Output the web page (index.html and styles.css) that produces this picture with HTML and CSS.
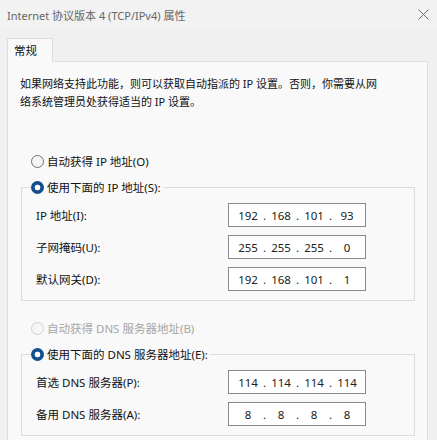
FILE: index.html
```html
<!DOCTYPE html>
<html lang="zh-CN">
<head>
    <meta charset="UTF-8">
    <title>Internet 协议版本 4 (TCP/IPv4) 属性</title>
    <link rel="stylesheet" href="styles.css">
</head>
<body>
    <div class="window">
        <div class="titlebar">
            <span class="title">Internet 协议版本 4 (TCP/IPv4) 属性</span>
            <svg class="close" width="11" height="11" viewBox="0 0 11 11">
                <path d="M0.5 0.5 L10.5 10.5 M10.5 0.5 L0.5 10.5" stroke="#707070" stroke-width="1" fill="none"/>
            </svg>
        </div>

        <div class="content">
            <div class="tabs">
                <div class="tab">常规</div>
            </div>

            <div class="panel">
                <p class="desc">如果网络支持此功能，则可以获取自动指派的 IP 设置。否则，你需要从网<br>络系统管理员处获得适当的 IP 设置。</p>

                <div class="option option-first">
                    <span class="radio"></span>
                    <span>自动获得 IP 地址(O)</span>
                </div>

                <fieldset class="group">
                    <legend class="option">
                        <span class="radio checked"></span>
                        <span>使用下面的 IP 地址(S):</span>
                    </legend>
                    <div class="row">
                        <span class="label">IP 地址(I):</span>
                        <div class="ip"><span>192</span><i>.</i><span>168</span><i>.</i><span>101</span><i>.</i><span>93</span></div>
                    </div>
                    <div class="row">
                        <span class="label">子网掩码(U):</span>
                        <div class="ip"><span>255</span><i>.</i><span>255</span><i>.</i><span>255</span><i>.</i><span>0</span></div>
                    </div>
                    <div class="row">
                        <span class="label">默认网关(D):</span>
                        <div class="ip"><span>192</span><i>.</i><span>168</span><i>.</i><span>101</span><i>.</i><span>1</span></div>
                    </div>
                </fieldset>

                <div class="option option-dns disabled">
                    <span class="radio"></span>
                    <span>自动获得 DNS 服务器地址(B)</span>
                </div>

                <fieldset class="group group-dns">
                    <legend class="option">
                        <span class="radio checked"></span>
                        <span>使用下面的 DNS 服务器地址(E):</span>
                    </legend>
                    <div class="row">
                        <span class="label">首选 DNS 服务器(P):</span>
                        <div class="ip"><span>114</span><i>.</i><span>114</span><i>.</i><span>114</span><i>.</i><span>114</span></div>
                    </div>
                    <div class="row">
                        <span class="label">备用 DNS 服务器(A):</span>
                        <div class="ip"><span>8</span><i>.</i><span>8</span><i>.</i><span>8</span><i>.</i><span>8</span></div>
                    </div>
                </fieldset>
            </div>
        </div>
    </div>
</body>
</html>
```

FILE: styles.css
```css
body {
    margin: 0;
    background-color: #f0f0f0;
    font-family: "Noto Sans", "Noto Sans CJK SC", sans-serif;
    font-size: 11px;
    color: #111;
}
.window {
    width: 437px;
    height: 440px;
    overflow: hidden;
    background-color: #f0f0f0;
}
.titlebar {
    height: 27px;
    display: flex;
    align-items: center;
    justify-content: space-between;
    padding: 0 8px 0 7px;
    box-sizing: border-box;
    background-color: #f2f2f2;
}
.title {
    color: #666;
    font-size: 11px;
    padding-top: 2px;
}
.close {
    margin-top: 2px;
}
.content {
    padding: 11px 9px 0 7px;
}
.tabs {
    display: flex;
}
.tab {
    width: 46px;
    height: 24px;
    box-sizing: border-box;
    border: 1px solid #dedede;
    border-bottom: none;
    background-color: #f9f9f9;
    padding-left: 6px;
    line-height: 23px;
    font-size: 11.5px;
    margin-bottom: -1px;
    position: relative;
}
.panel {
    background-color: #f9f9f9;
    border: 1px solid #dedede;
    height: 400px;
    padding: 13px 12px 0 12px;
}
.desc {
    margin: 0;
    line-height: 18px;
}
.option {
    display: flex;
    align-items: center;
    height: 20px;
    gap: 3px;
    font-size: 11.5px;
}
.option-first {
    margin: 40px 0 0 11px;
}
.option-dns {
    margin: 17px 0 0 11px;
}
.disabled {
    color: #a6a6a6;
}
.radio {
    width: 13px;
    height: 13px;
    box-sizing: border-box;
    border-radius: 50%;
    border: 1px solid #707070;
    background-color: #f6f6f6;
}
.disabled .radio {
    border-color: #cfcfcf;
}
.radio.checked {
    border: none;
    background: radial-gradient(circle, #fff 0 2.6px, #134f8c 3.2px);
}
.group {
    margin: 6px 0 0 1px;
    width: 394px;
    box-sizing: border-box;
    border: 1px solid #dcdcdc;
    padding: 6px 0 9px 14px;
}
.group legend {
    padding: 0 2px 0 0;
    margin-left: -5px;
}
.group-dns {
    margin-top: 6px;
}
.row {
    display: flex;
    align-items: center;
    height: 24px;
    margin-bottom: 8px;
}
.row:last-child {
    margin-bottom: 0;
}
.label {
    width: 192px;
    font-size: 11.5px;
}
.ip {
    width: 138px;
    height: 24px;
    box-sizing: border-box;
    border: 1px solid #8a8a8a;
    background-color: #fff;
    display: flex;
    align-items: center;
    padding-left: 6px;
    font-size: 11.5px;
    color: #222;
}
.ip span {
    width: 26px;
    text-align: center;
}
.ip i {
    font-style: normal;
    width: 7px;
    text-align: center;
}
```
